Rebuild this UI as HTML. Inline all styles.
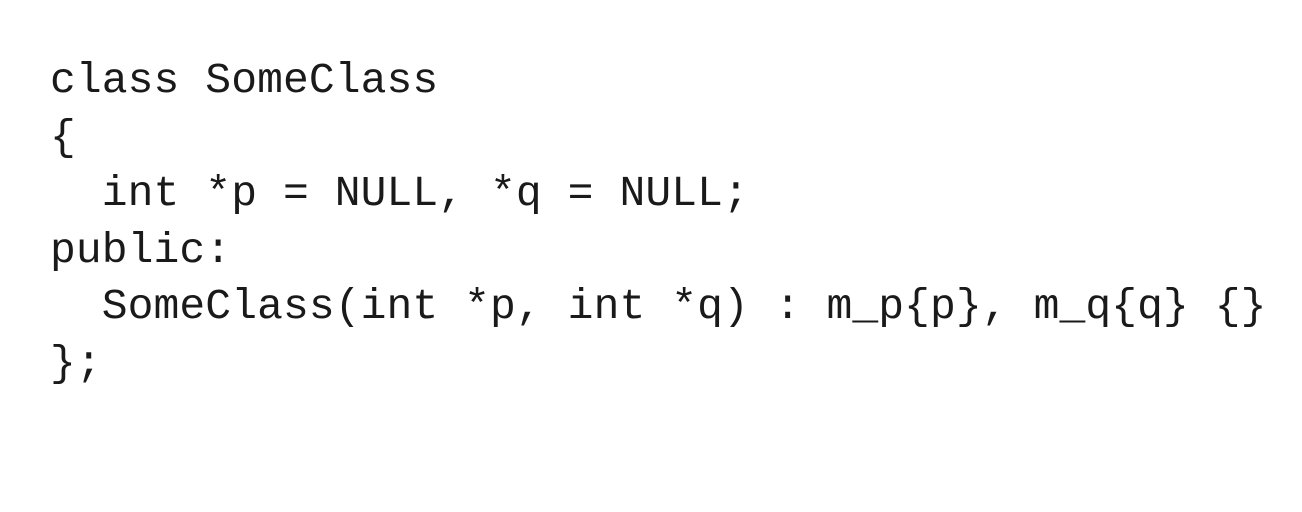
<!DOCTYPE html>
<html><head><meta charset="utf-8"><style>
html,body{margin:0;padding:0;background:#fff;width:1302px;height:512px;overflow:hidden}
pre{position:absolute;left:50px;top:53px;margin:0;font-family:"Liberation Mono",monospace;font-size:43px;line-height:56.5px;color:#1a1a1a;letter-spacing:0.08px}
</style></head><body>
<pre>class SomeClass
{
  int *p = NULL, *q = NULL;
public:
  SomeClass(int *p, int *q) : m_p{p}, m_q{q} {}
};</pre>
</body></html>
